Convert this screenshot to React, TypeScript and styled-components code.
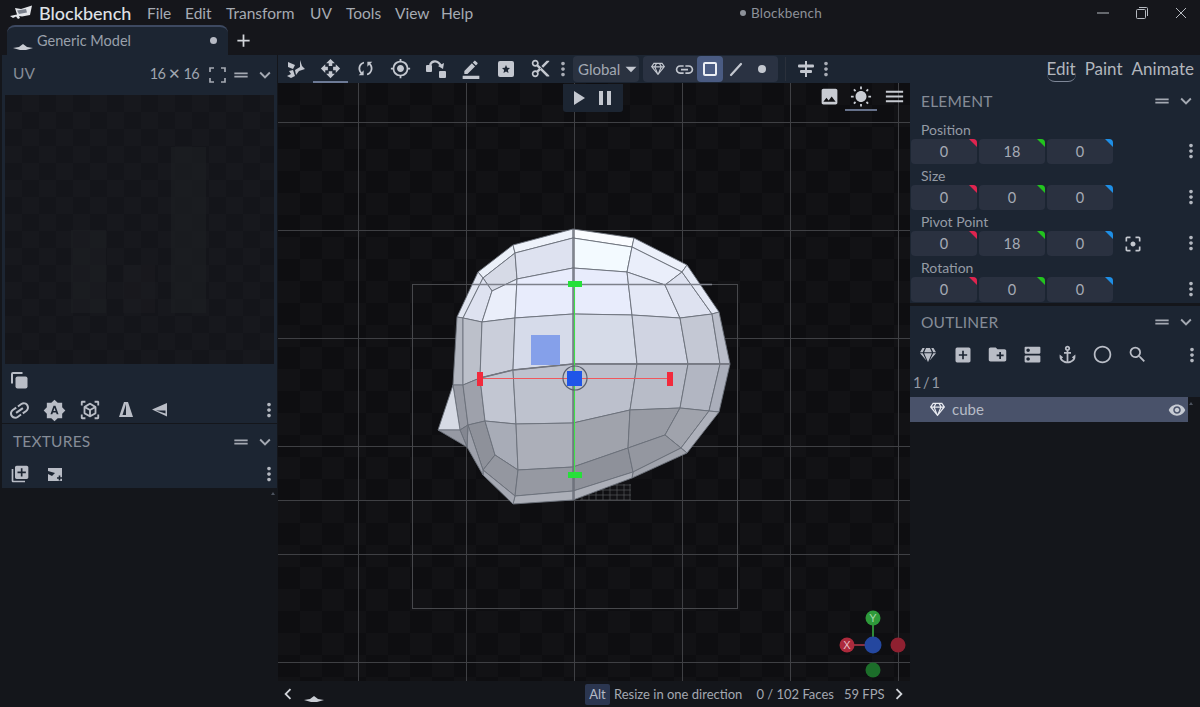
import React from "react";
import styled, { createGlobalStyle } from "styled-components";
import {
  MdOpenWith, MdGpsFixed, MdBorderColor, MdContentCut, MdLink, MdImage, MdWbSunny, MdMenu,
  MdDragHandle, MdExpandMore, MdFilterCenterFocus, MdAddBox, MdCreateNewFolder, MdDns, MdAnchor,
  MdRadioButtonUnchecked, MdSearch, MdVisibility, MdBrightnessAuto, MdViewInAr, MdLibraryAdd,
  MdPlayArrow, MdPause, MdChevronLeft, MdChevronRight, MdAdd, MdArrowDropDown, MdSync, MdMoreVert,
} from "react-icons/md";
import { FaGem, FaRegGem } from "react-icons/fa";

const Global = createGlobalStyle`
  html, body { margin: 0; padding: 0; height: 100%; background: #14161b; overflow: hidden; }
  #root { height: 100%; }
  * { box-sizing: border-box; }
  svg { flex: none; }
`;

const Shell = styled.div`
  width: 1200px; height: 707px; display: flex; flex-direction: column;
  background: #14161b; color: #a4a9b2;
  font-family: Lato, "Noto Sans", sans-serif; overflow: hidden;
`;
const TitleBar = styled.div`
  height: 25px; padding-top: 1px; display: flex; align-items: center; padding-left: 10px; background: #15161b; flex: none;
`;
const Brand = styled.span`
  font-size: 18px; font-weight: 500; color: #dfe1e6; margin-left: 6px; width: 108px; line-height: 24px;
`;
const MenuItem = styled.span<{ $w: number }>`
  width: ${(p) => p.$w}px; font-size: 15.5px; line-height: 24px; color: #a6abb3; flex: none; white-space: nowrap;
`;
const WindowTitle = styled.span`
  margin-left: 269px; display: flex; align-items: center; gap: 5px; font-size: 13.5px; line-height: 24px; letter-spacing: .2px; color: #8d9199;
`;
const TitleDot = styled.span`
  width: 6px; height: 6px; border-radius: 50%; background: #8d9199;
`;
const WindowControls = styled.div`
  margin-left: auto; display: flex; align-items: center; height: 24px; padding-right: 12px; gap: 25px; color: #b6bac1;
`;
const TabBar = styled.div`
  height: 30px; display: flex; align-items: stretch; padding-left: 7px; background: #15161b; flex: none;
`;
const Tab = styled.div`
  width: 221px; display: flex; align-items: center; padding: 0 11px 0 6px; position: relative;
  background: #1c2532; border-top: 2px solid #3d4961; border-radius: 8px 8px 0 0;
  font-size: 14.5px; line-height: 24px; color: #99a0ab;
`;
const TabIcon = styled.span`
  display: flex; position: relative; top: 5px;
`;
const TabText = styled.span`
  margin-left: 4px;
`;
const TabDot = styled.span`
  width: 7px; height: 7px; border-radius: 50%; background: #b6bac4; margin-left: auto; position: relative; top: -1px;
`;
const AddTab = styled.span`
  display: flex; align-items: center; margin-left: 5px; color: #d3d6db;
`;
const Main = styled.div`
  flex: 1; display: flex; min-height: 0;
`;
const LeftSide = styled.aside`
  width: 278px; flex: none; padding: 0 1px 0 2px; display: flex; flex-direction: column; position: relative; background: #14161b;
`;
const Panel = styled.section`
  background: #1c2532; display: flex; flex-direction: column;
`;
const PanelHeader = styled.header<{ $h: number; $end?: number }>`
  height: ${(p) => p.$h}px; display: flex; align-items: center; padding: 0 ${(p) => p.$end ?? 2}px 0 11px; flex: none; color: #a4a9b2;
`;
const PanelTitle = styled.span<{ $nudge?: number }>`
  font-size: 15.5px; line-height: 20px; color: #858c97; letter-spacing: .2px; margin-right: auto; position: relative; top: ${(p) => p.$nudge ?? 0}px;
`;
const UvSize = styled.span`
  font-size: 14.5px; line-height: 20px; letter-spacing: -.7px; color: #a0a6af; margin-right: 6px; position: relative; top: -1px;
`;
const UvArea = styled.div`
  height: 269px; margin: 0 3px; background-color: #14151a; position: relative;
  background-image: conic-gradient(#17181d 25%, transparent 0 50%, #17181d 0 75%, transparent 0);
  background-size: 34px 34px; overflow: hidden;
`;
const Toolrow = styled.div<{ $h: number; $pad?: number }>`
  height: ${(p) => p.$h}px; display: flex; align-items: center; padding-left: ${(p) => p.$pad ?? 0}px; color: #b9bdc6; flex: none;
`;
const IconCell = styled.span<{ $w?: number }>`
  width: ${(p) => p.$w ?? 35}px; display: flex; align-items: center; justify-content: center; flex: none; color: inherit;
`;
const EndDots = styled.span`
  margin-left: auto; width: 16px; display: flex; justify-content: center; color: #b4b8c0;
`;
const Center = styled.div`
  flex: 1; min-width: 0; display: flex; flex-direction: column;
`;
const Toolbar = styled.div`
  height: 28px; display: flex; align-items: center; background: #1c2532; color: #c3c7cf; flex: none;
`;
const ToolButton = styled.span<{ $active?: boolean }>`
  width: 35px; height: 26px; margin-top: 1px; display: flex; align-items: center; justify-content: center; flex: none;
  border-bottom: 2px solid ${(p) => (p.$active ? "#6d7a96" : "transparent")};
`;
const DotsCell = styled.span<{ $ml?: number }>`
  width: 10px; margin-left: ${(p) => p.$ml ?? 0}px; display: flex; justify-content: center; flex: none; color: #a9adb6;
`;
const SelectBox = styled.span`
  width: 66px; height: 26px; margin-left: 5px; padding-left: 5px; display: flex; align-items: center;
  background: #2a3240; border-radius: 4px; font-size: 15px; line-height: 26px; color: #a2a8b2; flex: none;
`;
const SelectCaret = styled.span`
  display: flex; margin-left: -2px; color: #c3c7cf;
`;
const ModeGroup = styled.div`
  margin-left: 4px; padding: 0 3px 0 2px; height: 26px; display: flex; background: #2a3242; border-radius: 4px; flex: none;
`;
const ModeButton = styled.span<{ $active?: boolean }>`
  width: 26px; height: 26px; display: flex; align-items: center; justify-content: center;
  background: ${(p) => (p.$active ? "#4a5b82" : "transparent")}; color: ${(p) => (p.$active ? "#eceff5" : "#c3c7cf")}; border-radius: 4px;
`;
const VSep = styled.span`
  width: 1px; height: 24px; background: #2a303b; margin: 0 7px 0 7px; flex: none;
`;
const Modes = styled.div`
  margin-left: auto; display: flex; align-items: center; padding-right: 6px; gap: 9px; font-size: 17px; line-height: 24px; color: #b2b6bd;
`;
const ModeLabel = styled.span<{ $active?: boolean }>`
  position: relative;
  border-bottom: ${(p) => (p.$active ? "1px solid #7f8898" : "1px solid transparent")};
  border-radius: 0 0 8px 8px;
`;
const Work = styled.div`
  flex: 1; display: flex; min-height: 0;
`;
const ViewColumn = styled.div`
  flex: 1; min-width: 0; display: flex; flex-direction: column;
`;
const Viewport = styled.div`
  flex: 1; position: relative; overflow: hidden; background-color: #0e0e11;
  background-image: conic-gradient(#121215 25%, transparent 0 50%, #121215 0 75%, transparent 0);
  background-size: 44px 44px;
`;
const Scene = styled.svg`
  position: absolute; left: 0; top: 0; display: block;
`;
const PlayBar = styled.div`
  position: absolute; left: 285px; top: 1px; width: 60px; height: 28px; background: #1c2532; border-radius: 0 0 3px 3px;
  display: flex; align-items: center; padding-left: 3px; gap: 3px; color: #c3c7cf;
`;
const ViewTools = styled.div`
  position: absolute; right: 0; top: 1px; height: 27px; display: flex; color: #c8cbd2;
`;
const ViewTool = styled.span<{ $active?: boolean }>`
  width: 32px; display: flex; align-items: center; justify-content: center;
  border-bottom: 2px solid ${(p) => (p.$active ? "#66718a" : "transparent")};
  margin-right: ${(p) => (p.$active ? 1 : 0)}px;
`;
const StatusBar = styled.footer`
  height: 26px; display: flex; align-items: center; background: #14161b; color: #a3a8b1; font-size: 13px; line-height: 20px; flex: none; position: relative;
`;
const StatusDiamond = styled.span`
  width: 32px; display: flex; justify-content: center; position: relative; top: 4px; flex: none;
`;
const KeyCap = styled.span`
  background: #2b3650; color: #b4bac6; height: 21px; width: 25px; margin-left: 255px; display: flex; align-items: center; justify-content: center; border-radius: 2px; flex: none;
`;
const StatusText = styled.span<{ $ml: number }>`
  margin-left: ${(p) => p.$ml}px; white-space: nowrap; flex: none;
`;
const StatusEnd = styled.span`
  margin-left: auto; width: 23px; display: flex; justify-content: center; color: #d0d3d9;
`;
const StatusLeft = styled.span`
  width: 20px; display: flex; justify-content: center; color: #d0d3d9; flex: none;
`;
const RightSide = styled.aside`
  width: 290px; flex: none; display: flex; flex-direction: column; background: #14161b; position: relative;
`;
const FormLabel = styled.div`
  height: 17px; padding-left: 11px; margin-top: 3px; font-size: 14px; line-height: 15px; color: #959ba5;
`;
const FieldRow = styled.div`
  height: 26px; display: flex; align-items: flex-start; gap: 2px; padding-left: 1px; color: #a9adb6; position: relative;
`;
const NumField = styled.span<{ $c: string }>`
  width: 66px; height: 25px; padding-top: 1px; background: #2a3140; border-radius: 4px; position: relative; overflow: hidden;
  display: flex; align-items: center; justify-content: center; font-size: 14.5px; line-height: 24px; color: #a6abb5;
  &::after {
    content: ""; position: absolute; right: 0; top: 0; width: 8px; height: 8px; background: ${(p) => p.$c};
    clip-path: polygon(0 0, 100% 0, 100% 100%);
  }
`;
const FieldEnd = styled.span`
  position: absolute; right: 1px; top: 1px; width: 16px; display: flex; justify-content: center; color: #b4b8c0;
`;
const PivotBtn = styled.span`
  width: 36px; height: 25px; display: flex; align-items: center; justify-content: center; color: #c4c8cf;
`;
const Spacer = styled.div<{ $h: number }>`
  height: ${(p) => p.$h}px; flex: none;
`;
const Count = styled.div`
  height: 19px; padding-left: 3px; font-size: 14.5px; line-height: 24px; word-spacing: -2px; color: #959ba5;
`;
const OutlinerRow = styled.div`
  width: 278px; height: 25px; background: #49526a; display: flex; align-items: center; padding-left: 20px; color: #e8eaf0; flex: none;
`;
const RowName = styled.span`
  margin-left: 7px; font-size: 15px; line-height: 25px; color: #b6bbc6; margin-right: auto;
`;
const RowEye = styled.span`
  display: flex; margin-right: 2px; color: #c7cbd3;
`;
const ScrollMark = styled.span<{ $r: number; $t: number }>`
  position: absolute; right: ${(p) => p.$r}px; top: ${(p) => p.$t}px; width: 0; height: 0;
  border-left: 2px solid transparent; border-right: 2px solid transparent; border-bottom: 3px solid #4c525d;
`;

const Logo = () => (
  <svg width="23" height="16" viewBox="0 0 23 16"><path d="M0 11 7 9.500 5 3 11 4 22 .5 20 10 12 11.500 9 11 10 13 8 14 6 11.500 3 13Z" fill="#e4e6ea" /><path d="M7 5.500 16 4 17 7.500 9 9Z" fill="#7a808c" /></svg>
);
const Diamond = () => (
  <svg width="20" height="8" viewBox="0 0 20 8"><path d="M0 6 6 5 10 2 14 5 20 6 13 8H7Z" fill="#c9ccd3" /></svg>
);
const SnapIcon = () => (
  <svg width="20" height="20" viewBox="0 0 20 20" fill="currentColor"><path d="M14 1 16 7 19 10 13 12 10 16 9 11 14 8Z" /><path d="M2 3 9 6 7 10 2 8Z" /><path d="M3 12 7 11 9 17 5 19 1 17 5 15Z" /></svg>
);
const ArcIcon = () => (
  <svg width="22" height="20" viewBox="0 0 22 20" fill="none"><rect x="1" y="6" width="6" height="7" rx="1" fill="currentColor" /><rect x="14" y="12" width="7" height="7" rx="1" fill="currentColor" /><path d="M5 6C7 1 13 1 16 7" stroke="currentColor" strokeWidth="2.2" /><path d="M13 7 18 10 19 4Z" fill="currentColor" /></svg>
);
const StarBox = () => (
  <svg width="18" height="18" viewBox="0 0 18 18"><rect x="1" y="1" width="16" height="16" rx="2" fill="currentColor" /><path d="M9 5 10.200 7.800 13 8 10.900 9.900 11.500 13 9 11.400 6.500 13 7.100 9.900 5 8 7.800 7.800Z" fill="#1c2532" /></svg>
);
const LineIcon = () => (
  <svg width="16" height="16" viewBox="0 0 16 16"><path d="M3 14 13 3" stroke="currentColor" strokeWidth="2.2" strokeLinecap="round" /></svg>
);
const DotIcon = () => (
  <svg width="12" height="12" viewBox="0 0 12 12"><circle cx="6" cy="6" r="4" fill="currentColor" /></svg>
);
const SquareIcon = () => (
  <svg width="16" height="16" viewBox="0 0 16 16"><rect x="2" y="2" width="12" height="12" rx="1" fill="none" stroke="currentColor" strokeWidth="2" /></svg>
);
const AlignIcon = () => (
  <svg width="20" height="20" viewBox="0 0 20 20" fill="currentColor"><rect x="9" y="2" width="2" height="16" /><rect x="2" y="5.500" width="16" height="3" rx="1" /><rect x="4" y="11" width="12" height="3" rx="1" /></svg>
);
const Perspective = () => (
  <svg width="16" height="18" viewBox="0 0 16 18"><path d="M6 1H10L15 16H1Z" fill="currentColor" /><path d="M8 3 8 14H4.500Z" fill="#1c2532" /></svg>
);
const Ortho = () => (
  <svg width="18" height="16" viewBox="0 0 18 16"><path d="M1 7.500 16 1V14.500Z" fill="currentColor" /><path d="M5 8.500 14.500 8.500V11.500Z" fill="#1c2532" /></svg>
);
const AddImage = () => (
  <svg width="16" height="16" viewBox="0 0 16 16"><path d="M1 2H15V15H1Z" fill="currentColor" /><path d="M1 8 5 10 8 7 1 5Z" fill="#1c2532" /><path d="M10 12H15M12.500 9.500V14.500" stroke="#1c2532" strokeWidth="1.600" /></svg>
);
const CopyIcon = () => (
  <svg width="19" height="19" viewBox="0 0 19 19" fill="none"><path d="M12.500 2H3A1 1 0 0 0 2 3V12.500" stroke="currentColor" strokeWidth="2" /><rect x="5.500" y="5.500" width="12" height="12" rx="2" fill="currentColor" /></svg>
);
const Corners = () => (
  <svg width="17" height="16" viewBox="0 0 17 16" fill="none" stroke="currentColor" strokeWidth="1.700"><path d="M1 5V1H5M12 1H16V5M16 11V15H12M5 15H1V11" /></svg>
);
const WinMin = () => <svg width="14" height="14" viewBox="0 0 14 14"><path d="M1 7H13" stroke="currentColor" strokeWidth="1" /></svg>;
const WinRestore = () => <svg width="14" height="14" viewBox="0 0 14 14" fill="none" stroke="currentColor"><rect x="1.500" y="3.500" width="9" height="9" rx="1" /><path d="M4 1.500H11.500A1 1 0 0 1 12.500 2.500V10" /></svg>;
const WinClose = () => <svg width="14" height="14" viewBox="0 0 14 14"><path d="M2 2 12 12M12 2 2 12" stroke="currentColor" strokeWidth="1" /></svg>;

const Faces: [string, string][] = [
  ["235,240,248", "478,272 513,245 515,253 483,278"],
  ["238,242,250", "513,245 573,229 573,238 515,253"],
  ["250,252,255", "573,229 634,238 632,247 573,238"],
  ["236,240,250", "634,238 687,265 682,272 632,247"],
  ["214,218,230", "483,278 515,253 517,279 492,291"],
  ["222,226,240", "515,253 573,238 573,268 517,279"],
  ["243,250,255", "573,238 632,247 627,272 573,268"],
  ["234,238,250", "632,247 682,272 665,285 627,272"],
  ["225,229,240", "478,272 483,278 463,318 457,317"],
  ["222,226,240", "483,278 492,291 482,322 463,318"],
  ["234,238,250", "492,291 517,279 515,318 482,322"],
  ["232,236,252", "517,279 573,268 573,314 515,318"],
  ["232,236,252", "573,268 627,272 632,315 573,314"],
  ["228,232,246", "627,272 665,285 680,318 632,315"],
  ["222,226,240", "665,285 682,272 712,314 680,318"],
  ["228,232,244", "682,272 687,265 719,312 712,314"],
  ["178,182,192", "457,317 463,318 463,385 453,385"],
  ["188,192,202", "463,318 482,322 480,378 463,385"],
  ["202,206,218", "482,322 515,318 513,370 480,378"],
  ["214,219,234", "515,318 573,314 573,364 513,370"],
  ["214,219,232", "573,314 632,315 637,364 573,364"],
  ["208,212,226", "632,315 680,318 688,364 637,364"],
  ["196,200,212", "680,318 712,314 720,364 688,364"],
  ["186,190,202", "712,314 719,312 730,364 720,364"],
  ["150,153,163", "453,385 463,385 468,425 460,430"],
  ["158,161,171", "463,385 480,378 485,421 468,425"],
  ["194,198,210", "480,378 513,370 516,424 485,421"],
  ["190,194,206", "513,370 573,364 573,423 516,424"],
  ["188,192,204", "573,364 637,364 630,410 573,423"],
  ["184,188,200", "637,364 688,364 680,408 630,410"],
  ["178,182,194", "688,364 720,364 709,411 680,408"],
  ["170,174,186", "720,364 730,364 719,412 709,411"],
  ["142,145,154", "468,425 485,421 495,455 483,470"],
  ["168,172,183", "485,421 516,424 518,470 495,455"],
  ["172,175,185", "516,424 573,423 573,467 518,470"],
  ["160,163,172", "573,423 630,410 628,448 573,467"],
  ["152,155,164", "630,410 680,408 665,435 628,448"],
  ["160,163,172", "680,408 709,411 681,448 665,435"],
  ["174,177,187", "709,411 719,412 687,453 681,448"],
  ["148,151,160", "495,455 518,470 515,496 483,470"],
  ["150,153,162", "518,470 573,467 573,491 515,496"],
  ["142,145,154", "573,467 628,448 633,472 573,491"],
  ["148,151,160", "628,448 665,435 681,448 633,472"],
  ["160,163,172", "681,448 687,453 632,478 633,472"],
  ["172,175,184", "515,496 573,491 573,500 513,504"],
  ["172,175,184", "573,491 633,472 632,478 573,500"],
  ["165,168,178", "483,470 515,496 513,504 483,475"],
  ["158,161,171", "468,425 483,470 483,475 467,447"],
  ["132,135,145", "460,430 468,425 467,447"],
  ["214,218,228", "438,430 453,385 460,430"],
  ["150,153,163", "438,430 460,430 467,447"],
];

const ox = 278;
const oy = 83;
const shift = (pts: string) =>
  pts.split(" ").map((p) => { const [x, y] = p.split(",").map(Number); return `${x - ox},${y - oy}`; }).join(" ");

const VLines = [358, 466, 574, 682, 790, 898];
const HLines = [122, 230, 338, 446, 500, 554, 662];
const SmallGridX = [582, 589, 596, 603, 610, 617, 624, 630];
const SmallGridY = [485, 490, 495, 500];

const ViewScene = () => (
  <Scene width="632" height="598" viewBox="0 0 632 598">
    {VLines.map((x) => <line key={x} x1={x - ox + .5} x2={x - ox + .5} y1="0" y2="598" stroke="#3f4044" />)}
    {HLines.map((y) => <line key={y} y1={y - oy + .5} y2={y - oy + .5} x1="0" x2="632" stroke="#3f4044" />)}
    <rect x={412 - ox + .5} y={284 - oy + .5} width="325" height="324" fill="none" stroke="#47484c" />
    {SmallGridX.map((x) => <line key={x} x1={x - ox} x2={x - ox} y1={484 - oy} y2={500 - oy} stroke="#55565a" strokeWidth=".7" />)}
    {SmallGridY.map((y) => <line key={y} x1={580 - ox} x2={631 - ox} y1={y - oy} y2={y - oy} stroke="#55565a" strokeWidth=".7" />)}
    {Faces.map(([c, pts]) => <polygon key={pts} points={shift(pts)} fill={`rgb(${c})`} stroke="#6b707b" strokeWidth=".9" strokeLinejoin="round" />)}
    <polyline points={shift("480,378 513,370 573,364 637,364 688,364 730,364")} fill="none" stroke="#73767f" strokeWidth="1.400" />
    <line x1={472 - ox} x2={712 - ox} y1={284 - oy + .5} y2={284 - oy + .5} stroke="#7d808a" strokeWidth="1.400" />
    <line x1={574 - ox} x2={574 - ox} y1={229 - oy} y2={500 - oy} stroke="#6a6e78" strokeWidth="1.400" />
    <rect x={531 - ox} y={335 - oy} width="29" height="30" fill="#85a0ea" />
    <line x1={574.500 - ox} x2={574.500 - ox} y1={284 - oy} y2={475 - oy} stroke="#3fe04a" strokeWidth="1.100" />
    <line x1={480 - ox} x2={670 - ox} y1={378.500 - oy} y2={378.500 - oy} stroke="#f0575c" strokeWidth="1.100" />
    <circle cx={575 - ox} cy={378 - oy} r="12" fill="none" stroke="#5a5f6c" strokeWidth="1.200" />
    <rect x={567 - ox} y={371 - oy} width="15" height="15" fill="#1f55e8" />
    <rect x={568 - ox} y={281 - oy} width="14" height="6" fill="#27e03a" />
    <rect x={568 - ox} y={472 - oy} width="14" height="6" fill="#27e03a" />
    <rect x={477 - ox} y={372 - oy} width="6" height="14" fill="#f22a3c" />
    <rect x={667 - ox} y={372 - oy} width="6" height="14" fill="#f22a3c" />
    <line x1={873 - ox} x2={873 - ox} y1={625 - oy} y2={645 - oy} stroke="#2e8a36" strokeWidth="2" />
    <line x1={850 - ox} x2={873 - ox} y1={645 - oy} y2={645 - oy} stroke="#8a2f3c" strokeWidth="2" />
    <circle cx={873 - ox} cy={670 - oy} r="7.500" fill="#1c6e2a" />
    <circle cx={898 - ox} cy={645 - oy} r="7.500" fill="#8f2030" />
    <circle cx={873 - ox} cy={618 - oy} r="7.500" fill="#2e9a3a" />
    <circle cx={847 - ox} cy={645 - oy} r="7.500" fill="#ad2a3c" />
    <circle cx={873 - ox} cy={645 - oy} r="8.500" fill="#24479f" />
    <text x={873 - ox} y={622 - oy} textAnchor="middle" fontSize="11" fontFamily="Liberation Sans" fill="#a6d8aa">Y</text>
    <text x={847 - ox} y={649 - oy} textAnchor="middle" fontSize="11" fontFamily="Liberation Sans" fill="#e8c0c6">X</text>
  </Scene>
);

const UvMarks = () => (
  <Scene width="269" height="269" viewBox="0 0 269 269">
    <rect x="166" y="52" width="35" height="166" fill="#1d1f23" opacity=".6" />
    <rect x="66" y="135" width="35" height="83" fill="#1d1f23" opacity=".5" />
    <rect x="118" y="170" width="32" height="48" fill="#1d1f23" opacity=".4" />
  </Scene>
);

const dots = <MdMoreVert size={22} />;
const red = "#e0244f";
const green = "#22c41e";
const blue = "#1e8fe6";

const Fields = ({ vals, pivot }: { vals: number[]; pivot?: boolean }) => (
  <FieldRow>
    <NumField $c={red}>{vals[0]}</NumField>
    <NumField $c={green}>{vals[1]}</NumField>
    <NumField $c={blue}>{vals[2]}</NumField>
    {pivot && <PivotBtn><MdFilterCenterFocus size={20} /></PivotBtn>}
    <FieldEnd>{dots}</FieldEnd>
  </FieldRow>
);

const PanelControls = () => (
  <>
    <IconCell $w={24}><MdDragHandle size={20} /></IconCell>
    <IconCell $w={24}><MdExpandMore size={22} /></IconCell>
  </>
);

export default function App() {
  return (
    <Shell>
      <Global />
      <TitleBar>
        <Logo />
        <Brand>Blockbench</Brand>
        <MenuItem $w={38}>File</MenuItem>
        <MenuItem $w={41}>Edit</MenuItem>
        <MenuItem $w={84}>Transform</MenuItem>
        <MenuItem $w={36}>UV</MenuItem>
        <MenuItem $w={49}>Tools</MenuItem>
        <MenuItem $w={46}>View</MenuItem>
        <MenuItem $w={30}>Help</MenuItem>
        <WindowTitle><TitleDot />Blockbench</WindowTitle>
        <WindowControls>
          <WinMin />
          <WinRestore />
          <WinClose />
        </WindowControls>
      </TitleBar>
      <TabBar>
        <Tab>
          <TabIcon><Diamond /></TabIcon>
          <TabText>Generic Model</TabText>
          <TabDot />
        </Tab>
        <AddTab><MdAdd size={21} /></AddTab>
      </TabBar>
      <Main>
        <LeftSide>
          <Panel>
            <PanelHeader $h={40} $end={0}>
              <PanelTitle $nudge={-2}>UV</PanelTitle>
              <UvSize>16 ✕ 16</UvSize>
              <IconCell $w={24}><Corners /></IconCell>
              <IconCell $w={24}><MdDragHandle size={20} /></IconCell>
              <IconCell $w={24}><MdExpandMore size={22} /></IconCell>
            </PanelHeader>
            <UvArea><UvMarks /></UvArea>
            <Toolrow $h={33} $pad={2}><IconCell $w={31}><CopyIcon /></IconCell></Toolrow>
            <Toolrow $h={26}>
              <IconCell $w={35}><MdLink size={25} style={{ transform: "rotate(-35deg)" }} /></IconCell>
              <IconCell $w={35}><MdBrightnessAuto size={23} /></IconCell>
              <IconCell $w={36}><MdViewInAr size={22} /></IconCell>
              <IconCell $w={35}><Perspective /></IconCell>
              <IconCell $w={33}><Ortho /></IconCell>
              <EndDots>{dots}</EndDots>
            </Toolrow>
          </Panel>
          <Spacer $h={1} />
          <Panel>
            <PanelHeader $h={36} $end={0}>
              <PanelTitle $nudge={-1}>TEXTURES</PanelTitle>
              <PanelControls />
            </PanelHeader>
            <Toolrow $h={28} $pad={0}>
              <IconCell $w={35}><MdLibraryAdd size={20} /></IconCell>
              <IconCell $w={35}><AddImage /></IconCell>
              <EndDots>{dots}</EndDots>
            </Toolrow>
          </Panel>
          <ScrollMark $r={3} $t={437} />
        </LeftSide>
        <Center>
          <Toolbar>
            <ToolButton><SnapIcon /></ToolButton>
            <ToolButton $active><MdOpenWith size={21} /></ToolButton>
            <ToolButton><MdSync size={21} style={{ transform: "rotate(45deg)" }} /></ToolButton>
            <ToolButton><MdGpsFixed size={21} /></ToolButton>
            <ToolButton><ArcIcon /></ToolButton>
            <ToolButton><MdBorderColor size={20} /></ToolButton>
            <ToolButton><StarBox /></ToolButton>
            <ToolButton><MdContentCut size={21} /></ToolButton>
            <DotsCell>{dots}</DotsCell>
            <SelectBox>Global<SelectCaret><MdArrowDropDown size={26} /></SelectCaret></SelectBox>
            <ModeGroup>
              <ModeButton><FaRegGem size={14} /></ModeButton>
              <ModeButton><MdLink size={21} /></ModeButton>
              <ModeButton $active><SquareIcon /></ModeButton>
              <ModeButton><LineIcon /></ModeButton>
              <ModeButton><DotIcon /></ModeButton>
            </ModeGroup>
            <VSep />
            <IconCell $w={26}><AlignIcon /></IconCell>
            <DotsCell $ml={2}>{dots}</DotsCell>
            <Modes>
              <ModeLabel $active>Edit</ModeLabel>
              <ModeLabel>Paint</ModeLabel>
              <ModeLabel>Animate</ModeLabel>
            </Modes>
          </Toolbar>
          <Work>
            <ViewColumn>
              <Viewport>
                <ViewScene />
                <PlayBar>
                  <MdPlayArrow size={24} />
                  <MdPause size={24} />
                </PlayBar>
                <ViewTools>
                  <ViewTool><MdImage size={21} /></ViewTool>
                  <ViewTool $active><MdWbSunny size={22} /></ViewTool>
                  <ViewTool><MdMenu size={23} /></ViewTool>
                </ViewTools>
              </Viewport>
              <StatusBar>
                <StatusLeft><MdChevronLeft size={22} /></StatusLeft>
                <StatusDiamond><Diamond /></StatusDiamond>
                <KeyCap>Alt</KeyCap>
                <StatusText $ml={4}>Resize in one direction</StatusText>
                <StatusText $ml={14}>0 / 102 Faces</StatusText>
                <StatusText $ml={10}>59 FPS</StatusText>
                <StatusEnd><MdChevronRight size={22} /></StatusEnd>
              </StatusBar>
            </ViewColumn>
            <RightSide>
              <Panel>
                <PanelHeader $h={36}>
                  <PanelTitle>ELEMENT</PanelTitle>
                  <PanelControls />
                </PanelHeader>
                <FormLabel>Position</FormLabel>
                <Fields vals={[0, 18, 0]} />
                <FormLabel>Size</FormLabel>
                <Fields vals={[0, 0, 0]} />
                <FormLabel>Pivot Point</FormLabel>
                <Fields vals={[0, 18, 0]} pivot />
                <FormLabel>Rotation</FormLabel>
                <Fields vals={[0, 0, 0]} />
              </Panel>
              <Spacer $h={3} />
              <Panel>
                <PanelHeader $h={32}>
                  <PanelTitle>OUTLINER</PanelTitle>
                  <PanelControls />
                </PanelHeader>
                <Toolrow $h={33} $pad={0}>
                  <IconCell $w={35}><FaGem size={16} /></IconCell>
                  <IconCell $w={35}><MdAddBox size={20} /></IconCell>
                  <IconCell $w={35}><MdCreateNewFolder size={21} /></IconCell>
                  <IconCell $w={35}><MdDns size={21} /></IconCell>
                  <IconCell $w={35}><MdAnchor size={21} /></IconCell>
                  <IconCell $w={35}><MdRadioButtonUnchecked size={21} /></IconCell>
                  <IconCell $w={35}><MdSearch size={21} /></IconCell>
                  <EndDots>{dots}</EndDots>
                </Toolrow>
                <Count>1 / 1</Count>
                <Spacer $h={7} />
              </Panel>
              <OutlinerRow>
                <FaRegGem size={15} />
                <RowName>cube</RowName>
                <RowEye><MdVisibility size={18} /></RowEye>
              </OutlinerRow>
              <ScrollMark $r={7} $t={319} />
            </RightSide>
          </Work>
        </Center>
      </Main>
    </Shell>
  );
}
